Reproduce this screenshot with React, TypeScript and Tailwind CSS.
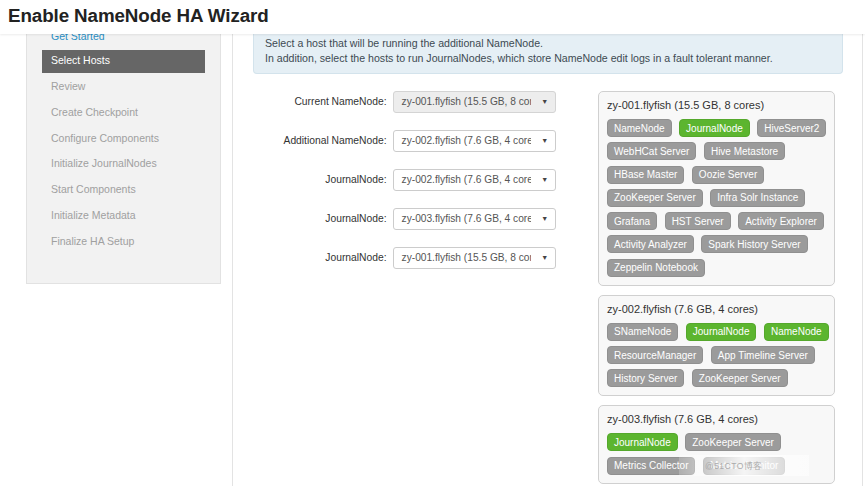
import React from "react";

const menu = [
  "Get Started",
  "Select Hosts",
  "Review",
  "Create Checkpoint",
  "Configure Components",
  "Initialize JournalNodes",
  "Start Components",
  "Initialize Metadata",
  "Finalize HA Setup",
];

const rows = [
  { label: "Current NameNode:", value: "zy-001.flyfish (15.5 GB, 8 cores)", disabled: true },
  { label: "Additional NameNode:", value: "zy-002.flyfish (7.6 GB, 4 cores)" },
  { label: "JournalNode:", value: "zy-002.flyfish (7.6 GB, 4 cores)" },
  { label: "JournalNode:", value: "zy-003.flyfish (7.6 GB, 4 cores)" },
  { label: "JournalNode:", value: "zy-001.flyfish (15.5 GB, 8 cores)" },
];

type B = [string, boolean?];
const hosts: { title: string; badges: B[]; watermark?: boolean }[] = [
  {
    title: "zy-001.flyfish (15.5 GB, 8 cores)",
    badges: [
      ["NameNode"],
      ["JournalNode", true],
      ["HiveServer2"],
      ["WebHCat Server"],
      ["Hive Metastore"],
      ["HBase Master"],
      ["Oozie Server"],
      ["ZooKeeper Server"],
      ["Infra Solr Instance"],
      ["Grafana"],
      ["HST Server"],
      ["Activity Explorer"],
      ["Activity Analyzer"],
      ["Spark History Server"],
      ["Zeppelin Notebook"],
    ],
  },
  {
    title: "zy-002.flyfish (7.6 GB, 4 cores)",
    badges: [
      ["SNameNode"],
      ["JournalNode", true],
      ["NameNode", true],
      ["ResourceManager"],
      ["App Timeline Server"],
      ["History Server"],
      ["ZooKeeper Server"],
    ],
  },
  {
    title: "zy-003.flyfish (7.6 GB, 4 cores)",
    badges: [["JournalNode", true], ["ZooKeeper Server"], ["Metrics Collector"], ["Metrics Monitor"]],
    watermark: true,
  },
];

export default function App() {
  return (
    <div
      className="w-[865px] h-[486px] overflow-hidden bg-white flex flex-col text-[#333]"
      style={{ fontFamily: '"Liberation Sans", Arial, Helvetica, sans-serif' }}
    >
      <div className="h-[34px] shrink-0 relative z-10 bg-white shadow-[0_1px_2px_rgba(0,0,0,0.08)] flex items-center pl-[8px]">
        <h1 className="text-[18.8px] font-bold text-[#222] tracking-[-0.1px] mt-[-1px]">Enable NameNode HA Wizard</h1>
      </div>
      <div className="flex-1 flex overflow-hidden">
        {/* left nav */}
        <div className="w-[232px] shrink-0 pl-[26px]">
          <div className="w-[195px] h-[260px] -mt-[10px] bg-[#f2f2f2] border border-[#e2e2e2] px-[15px] flex flex-col gap-[2.75px] text-[10.5px]">
            {menu.map((m, i) => (
              <div
                key={m}
                className={
                  "h-[23px] shrink-0 flex items-center pl-[9px] " +
                  (i === 0
                    ? "text-[#2a8fc4]"
                    : i === 1
                    ? "bg-[#666] text-white -mt-[1px]"
                    : "text-[#a0a0a0]")
                }
              >
                {m}
              </div>
            ))}
          </div>
        </div>
        {/* main */}
        <div className="w-[631px] shrink-0 border-l border-r border-[#e3e3e3] pl-[20px] pr-[20px]">
          <div className="w-[590px] h-[40px] bg-[#e5eff5] border border-t-0 border-[#d3e3ec] rounded-b-[4px] pl-[11px] text-[10.6px] text-[#3d4a52] leading-[15px] pt-[2px]">
            <div>Select a host that will be running the additional NameNode.</div>
            <div>In addition, select the hosts to run JournalNodes, which store NameNode edit logs in a fault tolerant manner.</div>
          </div>
          <div className="flex mt-[16px]">
            <div className="w-[303px] shrink-0 flex flex-col gap-[17px] pt-[1px]">
              {rows.map((r, i) => (
                <div key={i} className="flex items-center h-[22px]">
                  <div className="w-[134px] text-right text-[10.3px] text-[#333]">{r.label}</div>
                  <div
                    className={
                      "ml-[6px] w-[164px] h-[22px] border rounded-[3px] flex items-center text-[10.2px] text-[#555] " +
                      (r.disabled ? "bg-[#ededed] border-[#d4d4d4]" : "bg-white border-[#ccc]")
                    }
                  >
                    <div className="w-[137px] shrink-0 overflow-hidden whitespace-nowrap pl-[8px]">{r.value}</div>
                    <div className="flex-1 text-center text-[7px] text-[#444] pl-[4px]">▼</div>
                  </div>
                </div>
              ))}
            </div>
            <div className="w-[237px] ml-[42px] shrink-0 flex flex-col gap-[9px] mt-[1px]">
              {hosts.map((h) => (
                <div
                  key={h.title}
                  className="relative bg-[#f8f8f8] border border-[#d0d0d0] rounded-[5px] pl-[8px] pr-[4px] pt-[6px] pb-[8px]"
                >
                  <div className="text-[11px] text-[#333] leading-[14px] mb-[7px]">{h.title}</div>
                  <div className="flex flex-wrap gap-x-[7.5px] gap-y-[5.3px]">
                    {h.badges.map(([b, g]) => (
                      <span
                        key={b}
                        className={
                          "h-[18px] px-[6px] rounded-[4px] flex items-center text-[10px] text-white whitespace-nowrap border " +
                          (g ? "bg-[#5cb52f] border-[#55a82c]" : "bg-[#9b9b9b] border-[#909090]")
                        }
                      >
                        {b}
                      </span>
                    ))}
                  </div>
                  {h.watermark && (
                    <div className="absolute left-[80px] top-[49px] w-[130px] h-[21px] bg-gradient-to-r from-white/20 via-white/90 to-white/50 flex items-center pl-[26px] text-[8.5px] text-[#aaa] tracking-[0.5px]">
                      @51CTO博客
                    </div>
                  )}
                </div>
              ))}
            </div>
          </div>
        </div>
      </div>
    </div>
  );
}
